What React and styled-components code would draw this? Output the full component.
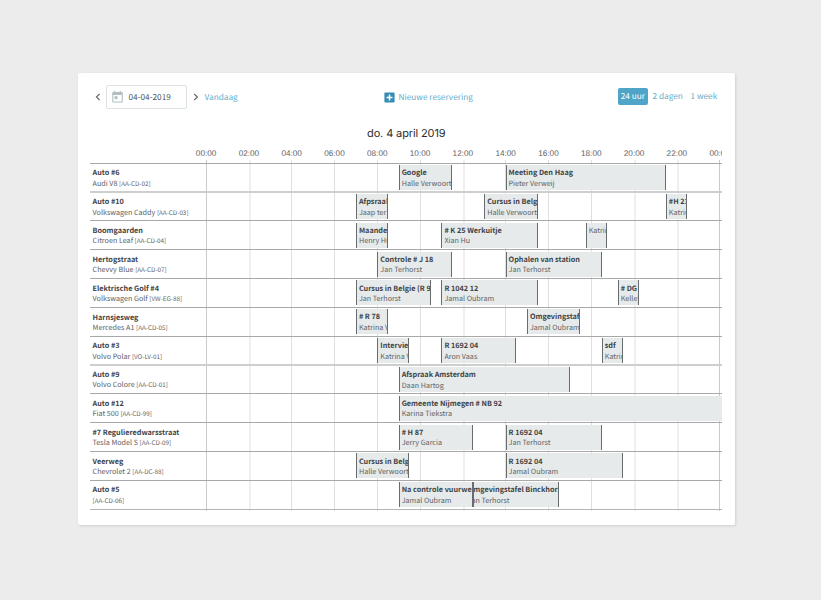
import React from "react";
import styled, { createGlobalStyle, css } from "styled-components";

const GlobalStyle = createGlobalStyle`
  * { box-sizing: border-box; }
  body { margin: 0; background: #ececec; font-family: "Noto Sans CJK SC", "Open Sans", sans-serif; color: #5f6366; text-rendering: geometricPrecision; }
  button { font: inherit; border: 0; background: none; padding: 0; text-rendering: inherit; }
`;

const Page = styled.main`
  height: 600px;
  padding: 73px 86px 0 78px;
`;

const Card = styled.section`
  height: 451.5px;
  padding: 12px 13.5px 0 12px;
  background: #fff;
  border-radius: 2px;
  box-shadow: 1px 1px 3px rgba(0, 0, 0, 0.12);
`;

const Toolbar = styled.header`
  display: grid;
  grid-template-columns: 294px 1fr auto;
  align-items: center;
  height: 24px;
  color: #64acca;
  font-size: 8.25px;
  line-height: 12px;
`;

const DateNav = styled.div`
  display: flex;
  align-items: center;
`;

const ArrowButton = styled.button`
  display: flex;
  justify-content: ${(p) => (p.$next ? "flex-start" : "center")};
  padding-left: ${(p) => (p.$next ? "6px" : 0)};
  width: ${(p) => (p.$next ? "17.5px" : "15px")};
  margin-right: ${(p) => (p.$next ? 0 : "1px")};
  color: #666;
`;

const DateField = styled.div`
  display: flex;
  align-items: center;
  gap: 5.5px;
  width: 81px;
  height: 24px;
  padding-left: 5px;
  border: 1px solid #dce3e3;
  border-radius: 2px;
  color: #53575a;
`;

const TextButton = styled.button`
  color: inherit;
  white-space: nowrap;
`;

const NewReservation = styled(TextButton)`
  display: flex;
  align-items: center;
  gap: 3.5px;
`;

const RangeSwitch = styled.div`
  display: flex;
  align-items: center;
  margin-right: 1.5px;
  margin-top: -2px;
`;

const RangeButton = styled(TextButton)`
  height: 17px;
  padding: 0 2.8px;
  margin-left: 2px;
  border-radius: 2px;
  ${(p) => p.$active && css`background: #4fa5c7; color: #fff;`}
`;

const Title = styled.h1`
  margin: 17.4px 0 0;
  padding-left: 1px;
  text-align: center;
  color: #2c2c2c;
  font: 400 11px/14px Inter, sans-serif;
  letter-spacing: -0.12px;
`;

const Axis = styled.div`
  display: flex;
  margin: 6.6px 0 0 94.7px;
  height: 12.6px;
  overflow: hidden;
  font: 8.2px/14.6px "Liberation Sans", Arial, sans-serif;
`;

const Tick = styled.span`
  flex: 0 0 42.8px;
  text-align: center;
`;

const Schedule = styled.div`
  position: relative;
  height: 351.9px;
  padding-top: 3px;
`;

const Row = styled.div`
  display: grid;
  grid-template-columns: 116.3px 1fr;
  height: 28.84px;
  border-top: ${(p) => (p.$soft ? "2px solid #cecece" : "1px solid #a8a8a8")};
  &:last-child { height: 29.84px; border-bottom: 1px solid #b4b4b4; }
`;

const Vehicle = styled.div`
  padding: ${(p) => (p.$soft ? "3.8px" : "4.8px")} 0 0 2.6px;
  font-size: 7.2px;
  line-height: 10.3px;
  white-space: nowrap;
`;

const Name = styled.div`
  font-weight: 700;
  font-size: 7.25px;
  color: #3f4346;
`;

const Plate = styled.small`
  font-size: 6.3px;
`;

const Lane = styled.div`
  display: grid;
  grid-template-columns: repeat(96, 5.35px) 1fr;
  grid-template-rows: 25px;
  padding-top: ${(p) => (p.$soft ? "0.8px" : "1.5px")};
  overflow: hidden;
`;

const Event = styled.div`
  grid-row: 1;
  grid-column: ${(p) => p.$from * 4 + 1} / ${(p) => (p.$to > 24 ? -1 : p.$to * 4 + 1)};
  overflow: hidden;
  padding: 3.2px 0 0 2px;
  border-left: 1px solid #686c6e;
  border-right: ${(p) => (p.$to > 24 ? 0 : "1px solid #686c6e")};
  background: #e6eaea;
  font-size: 7.2px;
  line-height: 10.3px;
  white-space: nowrap;
  ${(p) => p.$continued && css`text-indent: -8.8px;`}
`;

const Person = styled.div``;

const GridLines = styled.div`
  position: absolute;
  inset: 0 0 0 115.8px;
  display: flex;
  overflow: hidden;
  pointer-events: none;
`;

const GridLine = styled.i`
  flex: 0 0 42.8px;
  border-left: ${(p) => (p.$soft ? "2px solid #efefef" : `1px solid ${p.$edge ? "#cacaca" : "#dfdfdf"}`)};
`;

const Rows = styled.div`
  position: relative;
`;

const hours = ["00:00", "02:00", "04:00", "06:00", "08:00", "10:00", "12:00", "14:00", "16:00", "18:00", "20:00", "22:00", "00:00"];
const softHours = [1, 6, 10, 11];
const softRows = [1, 7];

const vehicles = [
  ["Auto #6", "Audi V8", "AA-CD-02", [[9, 11.5, "Google", "Halle Verwoort"], [14, 21.5, "Meeting Den Haag", "Pieter Verweij"]]],
  ["Auto #10", "Volkswagen Caddy", "AA-CD-03", [[7, 8.5, "Afpsraak", "Jaap ter Horst"], [13, 15.5, "Cursus in Belgie", "Halle Verwoort"], [21.5, 22.5, "#H 23", "Katrina"]]],
  ["Boomgaarden", "Citroen Leaf", "AA-CD-04", [[7, 8.5, "Maandelijks", "Henry Hu"], [11, 15.5, "# K 25 Werkuitje", "Xian Hu"], [17.75, 18.75, "", "Katrina"]]],
  ["Hertogstraat", "Chevvy Blue", "AA-CD-07", [[8, 11.5, "Controle # J 18", "Jan Terhorst"], [14, 18.5, "Ophalen van station", "Jan Terhorst"]]],
  ["Elektrische Golf #4", "Volkswagen Golf", "VW-EG-88", [[7, 10.5, "Cursus in Belgie (R 98)", "Jan Terhorst"], [11, 15.5, "R 1042 12", "Jamal Oubram"], [19.25, 20.25, "# DG 1", "Kelley"]]],
  ["Harnsjesweg", "Mercedes A1", "AA-CD-05", [[7, 8.5, "# R 78", "Katrina V"], [15, 17.5, "Omgevingstafel", "Jamal Oubram"]]],
  ["Auto #3", "Volvo Polar", "VO-LV-01", [[8, 9.5, "Interview", "Katrina V"], [11, 14.5, "R 1692 04", "Aron Vaas"], [18.5, 19.5, "sdf", "Katrina"]]],
  ["Auto #9", "Volvo Colore", "AA-CD-01", [[9, 17, "Afspraak Amsterdam", "Daan Hartog"]]],
  ["Auto #12", "Fiat 500", "AA-CD-99", [[9, 25, "Gemeente Nijmegen # NB 92", "Karina Tiekstra"]]],
  ["#7 Regulieredwarsstraat", "Tesla Model S", "AA-CD-09", [[9, 12.5, "# H 87", "Jerry Garcia"], [14, 18.5, "R 1692 04", "Jan Terhorst"]]],
  ["Veerweg", "Chevrolet 2", "AA-DC-88", [[7, 9.5, "Cursus in Belgie", "Halle Verwoort"], [14, 19.5, "R 1692 04", "Jamal Oubram"]]],
  ["Auto #5", "", "AA-CD-06", [[9, 12.5, "Na controle vuurwerk", "Jamal Oubram"], [12.5, 16.5, "Omgevingstafel Binckhorst", "Jan Terhorst", true]]],
];

function Chevron({ right }) {
  return (
    <svg width="6" height="8" viewBox="0 0 6 8" fill="none" stroke="currentColor" strokeWidth="1.1">
      <path d={right ? "M1.2 1 4.4 4 1.2 7" : "M4.6 1 1.4 4 4.6 7"} />
    </svg>
  );
}

function CalendarIcon() {
  return (
    <svg width="11" height="12" viewBox="0 0 11 12" fill="#b3bfc1">
      <path fillRule="evenodd" d="M2 0h1.3v1h4.4V0H9v1h.8q1 0 1 1v8.6q0 1-1 1H1.2q-1 0-1-1V2q0-1 1-1H2zM1.3 4v6.5h8.4V4z" />
      <path d="M2.5 5.2h3v3h-3z" />
    </svg>
  );
}

function PlusIcon() {
  return (
    <svg width="11" height="11" viewBox="0 0 11 11">
      <rect x=".4" y=".4" width="10.2" height="10.2" rx="1" fill="#338db4" />
      <path d="M5.5 2.5v6M2.5 5.5h6" stroke="#fff" strokeWidth="1.5" />
    </svg>
  );
}

export default function App() {
  return (
    <Page>
      <GlobalStyle />
      <Card>
        <Toolbar>
          <DateNav>
            <ArrowButton aria-label="Vorige dag"><Chevron /></ArrowButton>
            <DateField><CalendarIcon />04-04-2019</DateField>
            <ArrowButton $next aria-label="Volgende dag"><Chevron right /></ArrowButton>
            <TextButton>Vandaag</TextButton>
          </DateNav>
          <NewReservation><PlusIcon />Nieuwe reservering</NewReservation>
          <RangeSwitch>
            <RangeButton $active>24 uur</RangeButton>
            <RangeButton>2 dagen</RangeButton>
            <RangeButton>1 week</RangeButton>
          </RangeSwitch>
        </Toolbar>
        <Title>do. 4 april 2019</Title>
        <Axis>{hours.map((hour, i) => <Tick key={i}>{hour}</Tick>)}</Axis>
        <Schedule>
          <GridLines>
            {hours.map((_, i) => (
              <GridLine key={i} $edge={i === 0 || i === 12} $soft={softHours.includes(i)} />
            ))}
          </GridLines>
          <Rows>
            {vehicles.map(([name, model, plate, events], i) => {
              const soft = softRows.includes(i);
              return (
                <Row key={name} $soft={soft}>
                  <Vehicle $soft={soft}>
                    <Name>{name}</Name>
                    {model} <Plate>[{plate}]</Plate>
                  </Vehicle>
                  <Lane $soft={soft}>
                    {events.map(([from, to, title, person, continued]) => (
                      <Event key={from} $from={from} $to={to} $continued={continued}>
                        {title && <Name>{title}</Name>}
                        <Person>{person}</Person>
                      </Event>
                    ))}
                  </Lane>
                </Row>
              );
            })}
          </Rows>
        </Schedule>
      </Card>
    </Page>
  );
}
